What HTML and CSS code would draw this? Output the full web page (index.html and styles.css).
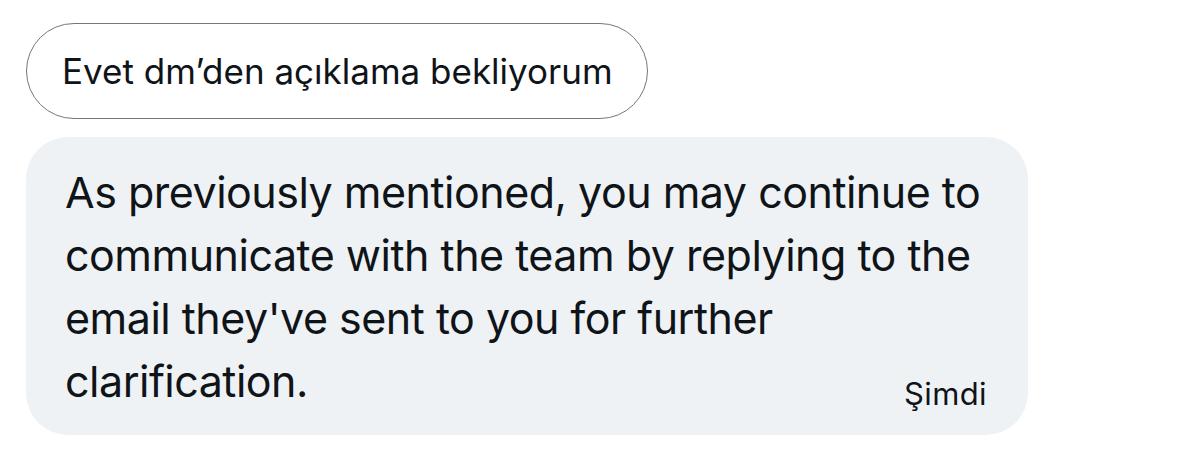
FILE: index.html
```html
<!DOCTYPE html>
<html lang="tr">
<head>
<meta charset="utf-8">
<link rel="stylesheet" href="styles.css">
</head>
<body>
<div class="thread">
  <div class="chip">Evet dm’den açıklama bekliyorum</div>
  <div class="bubble">
    <p class="bubble-text">As previously mentioned, you may continue to communicate with the team by replying to the email they've sent to you for further clarification.<span class="bubble-time">Şimdi</span></p>
  </div>
</div>
</body>
</html>
```
FILE: styles.css
```css
* { box-sizing: border-box; }
html, body { margin: 0; background: #ffffff; }
body {
  font-family: Inter, "Noto Sans", sans-serif;
  color: #0f1419;
  width: 1200px;
  height: 454px;
  overflow: hidden;
}
.thread {
  display: flex;
  flex-direction: column;
  align-items: flex-start;
  padding: 23px 0 0 26px;
}
.chip {
  height: 96px;
  display: inline-flex;
  align-items: center;
  padding: 0 34px 0 35px;
  border: 1.5px solid #777777;
  border-radius: 48px;
  font-size: 35px;
  white-space: nowrap;
}
.bubble {
  margin-top: 18px;
  width: 1002px;
  height: 298px;
  background: #eff2f4;
  border-radius: 42px;
  padding: 24px 41px 21px 39px;
}
.bubble-text {
  margin: 0;
  font-size: 43px;
  line-height: 63px;
  letter-spacing: -0.5px;
}
.bubble-time {
  float: right;
  margin-top: 26px;
  font-size: 31px;
  line-height: 36px;
  letter-spacing: 0.4px;
}
```
